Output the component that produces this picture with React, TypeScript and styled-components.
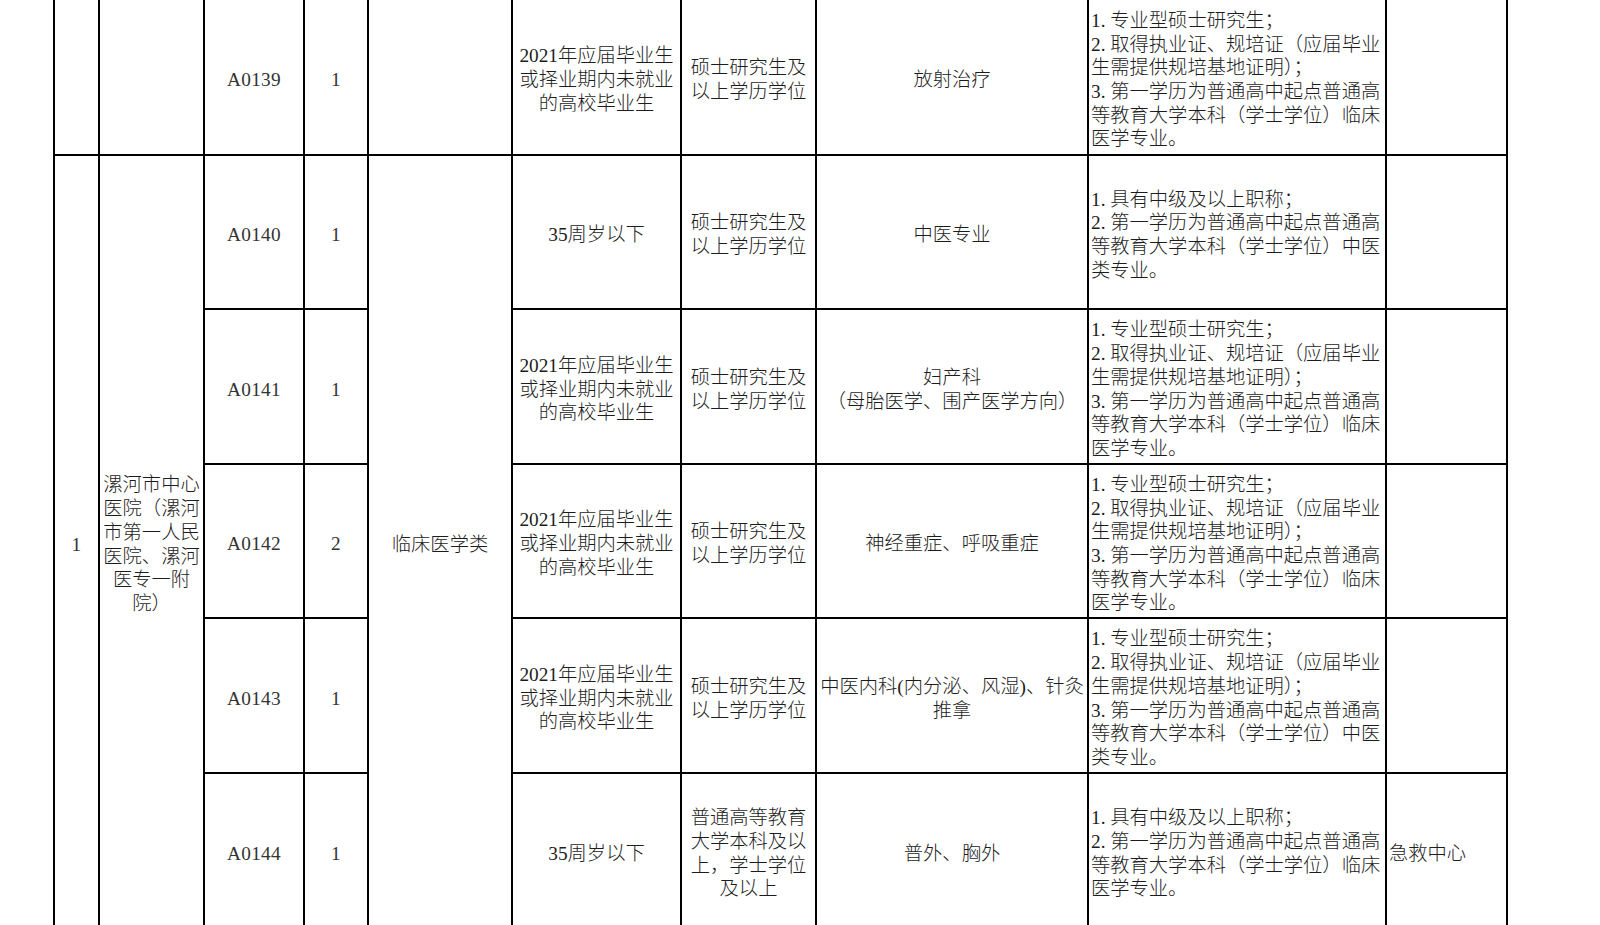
import React from 'react';
import styled, { createGlobalStyle } from 'styled-components';

const GlobalStyle = createGlobalStyle`
    html, body {
        margin: 0;
        padding: 0;
        background: #fff;
        overflow: hidden;
    }
    body {
        font-family: "Liberation Serif", "Noto Sans CJK SC", serif;
        color: #1c1c1c;
    }
`;

const Page = styled.div`
    width: 1600px;
    height: 925px;
    overflow: hidden;
    padding-left: 53px;
    box-sizing: border-box;
`;

const Sheet = styled.table`
    border-collapse: collapse;
    table-layout: fixed;
    width: 1455px;
    font-size: 19.3px;
    line-height: 23.7px;
    font-weight: 300;
    & > tbody > tr:first-child > td {
        border-top: 0;
    }
`;

const Row = styled.tr<{ $h: number }>`
    height: ${({ $h }) => $h}px;
`;

const Cell = styled.td<{ $align?: 'left' | 'center' }>`
    border: 2px solid #000;
    padding: 6px 2px 0;
    text-align: ${({ $align }) => $align ?? 'center'};
    vertical-align: middle;
    white-space: nowrap;
    overflow: hidden;
`;

const Line = styled.div`
    display: block;
`;

const Code = styled.span`
    color: #333;
    letter-spacing: 0.3px;
`;

const COLS = [45, 105, 100, 64, 144, 169, 135, 272, 298, 121];

const GRAD = ['2021年应届毕业生', '或择业期内未就业', '的高校毕业生'];
const MASTER = ['硕士研究生及', '以上学历学位'];
const AGE = ['35周岁以下'];

const reqGrad = (tail: string[]) => [
    '1. 专业型硕士研究生；',
    '2. 取得执业证、规培证（应届毕业',
    '生需提供规培基地证明）；',
    '3. 第一学历为普通高中起点普通高',
    ...tail,
];
const reqSenior = (tail: string[]) => [
    '1. 具有中级及以上职称；',
    '2. 第一学历为普通高中起点普通高',
    ...tail,
];
const CLINICAL = ['等教育大学本科（学士学位）临床', '医学专业。'];
const TCM = ['等教育大学本科（学士学位）中医', '类专业。'];

type Post = {
    code: string;
    count: string;
    cond: string[];
    edu: string[];
    major: string[];
    req: string[];
    note: string;
    h: number;
};

const posts: Post[] = [
    { code: 'A0139', count: '1', cond: GRAD, edu: MASTER, major: ['放射治疗'], req: reqGrad(CLINICAL), note: '', h: 155 },
    { code: 'A0140', count: '1', cond: AGE, edu: MASTER, major: ['中医专业'], req: reqSenior(TCM), note: '', h: 154 },
    {
        code: 'A0141',
        count: '1',
        cond: GRAD,
        edu: MASTER,
        major: ['妇产科', '（母胎医学、围产医学方向）'],
        req: reqGrad(CLINICAL),
        note: '',
        h: 155,
    },
    { code: 'A0142', count: '2', cond: GRAD, edu: MASTER, major: ['神经重症、呼吸重症'], req: reqGrad(CLINICAL), note: '', h: 154 },
    {
        code: 'A0143',
        count: '1',
        cond: GRAD,
        edu: MASTER,
        major: ['中医内科(内分泌、风湿)、针灸', '推拿'],
        req: reqGrad(TCM),
        note: '',
        h: 155,
    },
    {
        code: 'A0144',
        count: '1',
        cond: AGE,
        edu: ['普通高等教育', '大学本科及以', '上，学士学位', '及以上'],
        major: ['普外、胸外'],
        req: reqSenior(CLINICAL),
        note: '急救中心',
        h: 155,
    },
];

const HOSPITAL = ['漯河市中心', '医院（漯河', '市第一人民', '医院、漯河', '医专一附', '院）'];

function Lines({ items }: { items: string[] }) {
    return (
        <>
            {items.map((t, i) => (
                <Line key={i}>{t}</Line>
            ))}
        </>
    );
}

function App() {
    const span = posts.length - 1;
    return (
        <>
            <GlobalStyle />
            <Page>
                <Sheet>
                    <colgroup>
                        {COLS.map((w, i) => (
                            <col key={i} style={{ width: w }} />
                        ))}
                    </colgroup>
                    <tbody>
                        {posts.map((p, i) => (
                            <Row key={p.code} $h={p.h}>
                                {i === 0 && (
                                    <>
                                        <Cell />
                                        <Cell />
                                    </>
                                )}
                                {i === 1 && (
                                    <>
                                        <Cell rowSpan={span}>
                                            <Code>1</Code>
                                        </Cell>
                                        <Cell rowSpan={span}>
                                            <Lines items={HOSPITAL} />
                                        </Cell>
                                    </>
                                )}
                                <Cell>
                                    <Code>{p.code}</Code>
                                </Cell>
                                <Cell>
                                    <Code>{p.count}</Code>
                                </Cell>
                                {i === 0 && <Cell />}
                                {i === 1 && <Cell rowSpan={span}>临床医学类</Cell>}
                                <Cell>
                                    <Lines items={p.cond} />
                                </Cell>
                                <Cell>
                                    <Lines items={p.edu} />
                                </Cell>
                                <Cell>
                                    <Lines items={p.major} />
                                </Cell>
                                <Cell $align="left">
                                    <Lines items={p.req} />
                                </Cell>
                                <Cell $align="left">{p.note}</Cell>
                            </Row>
                        ))}
                    </tbody>
                </Sheet>
            </Page>
        </>
    );
}

export default App;
